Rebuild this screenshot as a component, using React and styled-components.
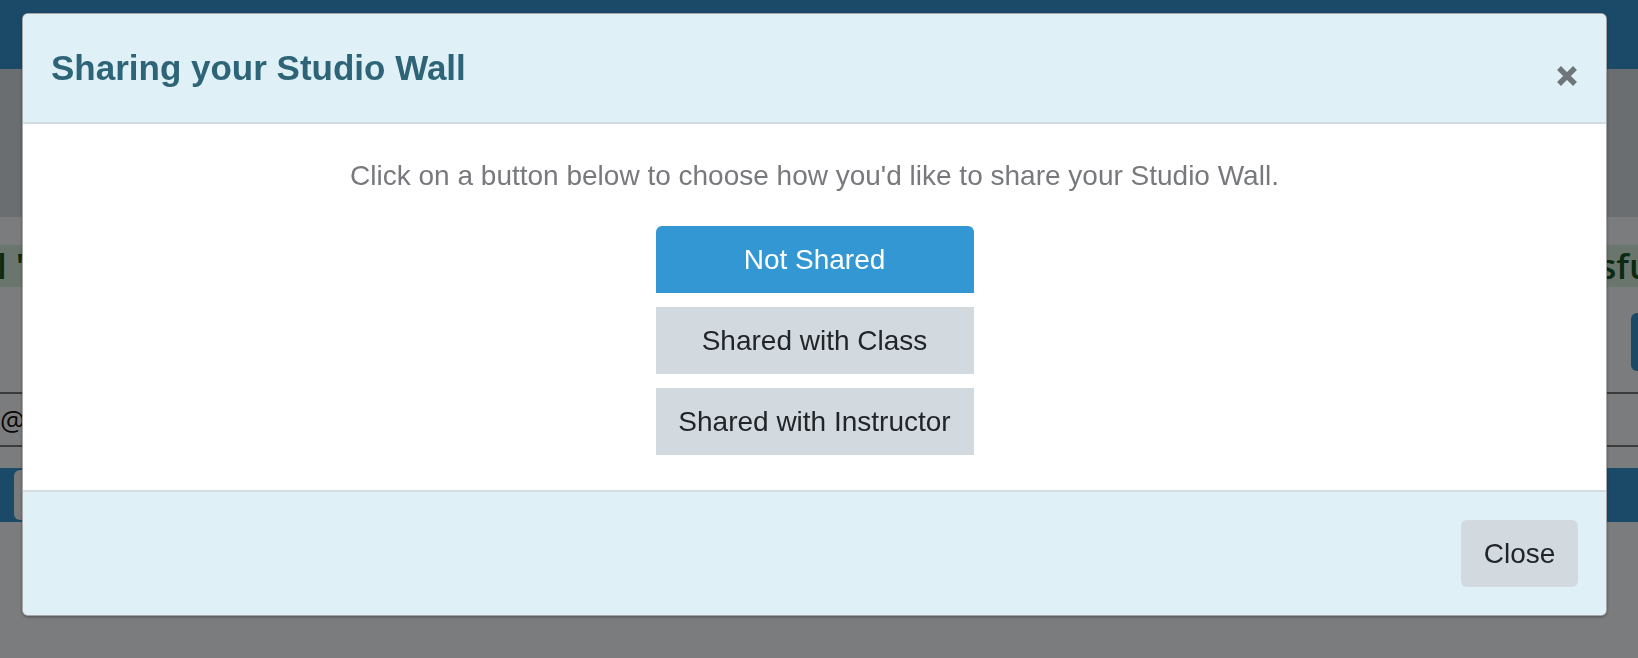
import React from "react";
import styled, { createGlobalStyle } from "styled-components";

const GlobalStyle = createGlobalStyle`
  html, body { margin: 0; padding: 0; }
  body {
    font-family: "Liberation Sans", Arial, Helvetica, sans-serif;
    background: #f6f8fc;
    overflow: hidden;
  }
`;

/* ---------- page behind the dialog ---------- */
const Page = styled.div`
  width: 1638px;
  height: 658px;
  overflow: hidden;
  background: #f6f8fc;
`;

const NavBar = styled.div`
  height: 69px;
  background: #3694d2;
`;

const PageHeader = styled.div`
  height: 148px;
  background: #d6dce2;
`;

const Content = styled.div`
  padding-top: 28px;
  display: flex;
  flex-direction: column;
`;

const AlertBar = styled.div`
  height: 42px;
  background: #d4edda;
  color: #155724;
  font-family: "Open Sans", "DejaVu Sans", sans-serif;
  font-weight: 600;
  font-size: 35px;
  line-height: 42px;
  display: flex;
  justify-content: space-between;
  overflow: hidden;
  white-space: nowrap;
`;

const AlertStart = styled.span`
  margin-left: -3px;
`;

const AlertEnd = styled.span`
  margin-right: -61px;
`;

const ActionRow = styled.div`
  display: flex;
  justify-content: flex-end;
  padding-top: 26px;
  height: 105px;
  box-sizing: border-box;
  overflow: hidden;
`;

const PageButton = styled.div`
  width: 120px;
  height: 58px;
  margin-right: -113px;
  border-radius: 6px;
  background: #3694d2;
  flex: none;
`;

const TableRow = styled.div`
  height: 55px;
  border-top: 2px solid #767676;
  border-bottom: 2px solid #767676;
  display: flex;
  align-items: center;
  font-family: "Open Sans", "DejaVu Sans", sans-serif;
  font-size: 28px;
  color: #111;
  box-sizing: border-box;
`;

const ToolBand = styled.div`
  margin-top: 21px;
  height: 54px;
  background: #3694d2;
  display: flex;
  align-items: stretch;
  padding-left: 14px;
`;

const ToolBtn = styled.div`
  width: 60px;
  border-radius: 6px 0 0 6px;
  background: #f2f4f6;
  margin: 2px 0;
`;

/* ---------- dialog ---------- */
const Backdrop = styled.div`
  position: fixed;
  inset: 0;
  background: rgba(0, 0, 0, 0.5);
`;

const Dialog = styled.div`
  position: fixed;
  top: 13px;
  left: 22px;
  width: 1585px;
  box-sizing: border-box;
  border: 1px solid rgba(0, 0, 0, 0.35);
  border-radius: 6px;
  overflow: hidden;
  background: #fff;
  box-shadow: 0 1px 3px rgba(0, 0, 0, 0.35);
`;

const Header = styled.div`
  display: flex;
  justify-content: space-between;
  align-items: flex-start;
  padding: 33px 28px 34px 28px;
  background: #dff0f7;
  border-bottom: 2px solid #d3dce1;
`;

const Title = styled.h4`
  margin: 0;
  font-size: 35px;
  line-height: 41px;
  font-weight: 700;
  color: #2e6477;
`;

const CloseX = styled.button`
  margin-top: 18px;
  padding: 0;
  border: 0;
  background: transparent;
  width: 22px;
  height: 22px;
  display: flex;
  cursor: pointer;
  color: #6f7679;
`;

const Body = styled.div`
  padding: 31px 28px 35px;
  display: flex;
  flex-direction: column;
  align-items: center;
`;

const Lead = styled.p`
  margin: 0 0 29px;
  font-size: 28px;
  line-height: 42px;
  color: #77797c;
  text-align: center;
`;

const Choices = styled.div`
  display: flex;
  flex-direction: column;
  gap: 14px;
`;

const Choice = styled.button`
  width: 318px;
  height: 67px;
  border: 0;
  padding: 0;
  font-family: inherit;
  font-size: 28px;
  cursor: pointer;
  border-radius: ${(p) => (p.$active ? "6px 6px 0 0" : "0")};
  background: ${(p) => (p.$active ? "#3397d3" : "#d3dadf")};
  color: ${(p) => (p.$active ? "#ffffff" : "#212529")};
`;

const Footer = styled.div`
  display: flex;
  justify-content: flex-end;
  padding: 28px;
  background: #dff0f7;
  border-top: 2px solid #d3dce1;
`;

const FooterButton = styled.button`
  width: 117px;
  height: 67px;
  border: 0;
  border-radius: 6px;
  background: #d3dadf;
  color: #212529;
  font-family: inherit;
  font-size: 28px;
  cursor: pointer;
`;

const options = ["Not Shared", "Shared with Class", "Shared with Instructor"];

export default function App() {
  return (
    <>
      <GlobalStyle />
      <Page>
        <NavBar />
        <PageHeader />
        <Content>
          <AlertBar>
            <AlertStart>l 'Portfolio'</AlertStart>
            <AlertEnd>successfully.</AlertEnd>
          </AlertBar>
          <ActionRow>
            <PageButton />
          </ActionRow>
          <TableRow>@,</TableRow>
          <ToolBand>
            <ToolBtn />
          </ToolBand>
        </Content>
      </Page>
      <Backdrop />
      <Dialog role="dialog" aria-label="Sharing your Studio Wall">
        <Header>
          <Title>Sharing your Studio Wall</Title>
          <CloseX aria-label="Close">
            <svg width="22" height="22" viewBox="0 0 22 22">
              <path d="M3 3 L19 19 M19 3 L3 19" stroke="currentColor" strokeWidth="5.4" fill="none" />
            </svg>
          </CloseX>
        </Header>
        <Body>
          <Lead>Click on a button below to choose how you'd like to share your Studio Wall.</Lead>
          <Choices>
            {options.map((o, i) => (
              <Choice key={o} $active={i === 0}>
                {o}
              </Choice>
            ))}
          </Choices>
        </Body>
        <Footer>
          <FooterButton>Close</FooterButton>
        </Footer>
      </Dialog>
    </>
  );
}
